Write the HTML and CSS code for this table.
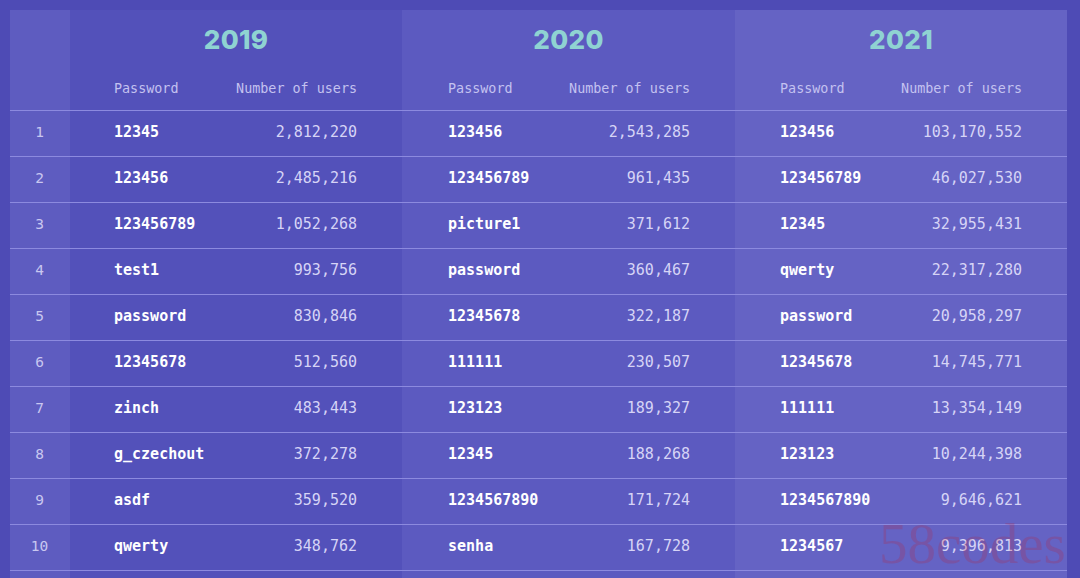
FILE: index.html
```html
<!DOCTYPE html>
<html>
<head>
<meta charset="utf-8">
<link rel="stylesheet" href="styles.css">
</head>
<body>
<div class="page">
  <table class="pw">
    <colgroup>
      <col class="c-num">
      <col class="c-pass"><col class="c-users">
      <col class="c-pass"><col class="c-users wide">
      <col class="c-pass"><col class="c-users">
    </colgroup>
    <thead>
      <tr class="years">
        <th class="num"></th>
        <th colspan="2" class="year y19">2019</th>
        <th colspan="2" class="year y20">2020</th>
        <th colspan="2" class="year y21">2021</th>
      </tr>
      <tr class="sub">
        <th class="num"></th>
        <th class="pass y19">Password</th><th class="users y19">Number of users</th>
        <th class="pass y20">Password</th><th class="users y20">Number of users</th>
        <th class="pass y21">Password</th><th class="users y21">Number of users</th>
      </tr>
    </thead>
    <tbody>
      <tr><td class="num">1</td><td class="pass y19">12345</td><td class="users y19">2,812,220</td><td class="pass y20">123456</td><td class="users y20">2,543,285</td><td class="pass y21">123456</td><td class="users y21">103,170,552</td></tr>
      <tr><td class="num">2</td><td class="pass y19">123456</td><td class="users y19">2,485,216</td><td class="pass y20">123456789</td><td class="users y20">961,435</td><td class="pass y21">123456789</td><td class="users y21">46,027,530</td></tr>
      <tr><td class="num">3</td><td class="pass y19">123456789</td><td class="users y19">1,052,268</td><td class="pass y20">picture1</td><td class="users y20">371,612</td><td class="pass y21">12345</td><td class="users y21">32,955,431</td></tr>
      <tr><td class="num">4</td><td class="pass y19">test1</td><td class="users y19">993,756</td><td class="pass y20">password</td><td class="users y20">360,467</td><td class="pass y21">qwerty</td><td class="users y21">22,317,280</td></tr>
      <tr><td class="num">5</td><td class="pass y19">password</td><td class="users y19">830,846</td><td class="pass y20">12345678</td><td class="users y20">322,187</td><td class="pass y21">password</td><td class="users y21">20,958,297</td></tr>
      <tr><td class="num">6</td><td class="pass y19">12345678</td><td class="users y19">512,560</td><td class="pass y20">111111</td><td class="users y20">230,507</td><td class="pass y21">12345678</td><td class="users y21">14,745,771</td></tr>
      <tr><td class="num">7</td><td class="pass y19">zinch</td><td class="users y19">483,443</td><td class="pass y20">123123</td><td class="users y20">189,327</td><td class="pass y21">111111</td><td class="users y21">13,354,149</td></tr>
      <tr><td class="num">8</td><td class="pass y19">g_czechout</td><td class="users y19">372,278</td><td class="pass y20">12345</td><td class="users y20">188,268</td><td class="pass y21">123123</td><td class="users y21">10,244,398</td></tr>
      <tr><td class="num">9</td><td class="pass y19">asdf</td><td class="users y19">359,520</td><td class="pass y20">1234567890</td><td class="users y20">171,724</td><td class="pass y21">1234567890</td><td class="users y21">9,646,621</td></tr>
      <tr><td class="num">10</td><td class="pass y19">qwerty</td><td class="users y19">348,762</td><td class="pass y20">senha</td><td class="users y20">167,728</td><td class="pass y21">1234567</td><td class="users y21">9,396,813</td></tr>
      <tr class="tail"><td class="num"></td><td class="pass y19"></td><td class="users y19"></td><td class="pass y20"></td><td class="users y20"></td><td class="pass y21"></td><td class="users y21"></td></tr>
    </tbody>
  </table>
  <div class="watermark">58codes</div>
</div>
</body>
</html>
```

FILE: styles.css
```css
html, body {
  margin: 0;
  padding: 0;
  background: #4e4bb5;
  overflow: hidden;
}
.page {
  position: relative;
  width: 1080px;
  height: 578px;
  padding: 10px 0 0 10px;
  box-sizing: border-box;
}
.pw {
  border-collapse: collapse;
  table-layout: fixed;
  width: 1057px;
  font-family: "DejaVu Sans Mono", "Liberation Mono", monospace;
}
.c-num { width: 60px; }
.c-pass { width: 150px; }
.c-users { width: 182px; }
.c-users.wide { width: 183px; }
.num { background: #5e5cc0; }
.y19 { background: #5351ba; }
.y20 { background: #5c5ac0; }
.y21 { background: #6563c4; }
th, td { padding: 0; }
.years th { height: 58px; vertical-align: middle; }
.year {
  font-family: "Inter", "Open Sans", sans-serif;
  font-weight: 800;
  font-size: 26px;
  color: #8fd3d2;
  letter-spacing: 0.3px;
  text-align: center;
}
.sub th {
  height: 42px;
  font-weight: 400;
  font-size: 13.4px;
  color: #c4c2f0;
  vertical-align: middle;
  padding-bottom: 0;
  box-sizing: border-box;
}
.sub th.pass { text-align: left; padding-left: 44px; }
.sub th.users { text-align: right; padding-right: 45px; }
.sub th.pass.y20 { padding-left: 46px; }
.sub th.pass.y21 { padding-left: 45px; }
.sub th, tbody td { border-bottom: 1px solid #8c8adf; }
tbody td {
  height: 46px;
  font-size: 15px;
  vertical-align: middle;
  padding-bottom: 2px;
  box-sizing: border-box;
}
td.num {
  text-align: center;
  color: #c9c7f0;
  font-size: 14.5px;
  padding-right: 1px;
}
td.pass {
  text-align: left;
  padding-left: 44px;
  color: #ffffff;
  font-weight: 700;
}
td.pass.y20 { padding-left: 46px; }
td.pass.y21 { padding-left: 45px; }
td.users {
  text-align: right;
  padding-right: 45px;
  color: #d6d4f6;
}
tr.tail td { height: 20px; border-bottom: none; }
.watermark {
  position: absolute;
  left: 879px;
  top: 511px;
  font-family: "Liberation Serif", serif;
  font-size: 57px;
  color: rgba(185, 30, 55, 0.22);
  pointer-events: none;
}
```
